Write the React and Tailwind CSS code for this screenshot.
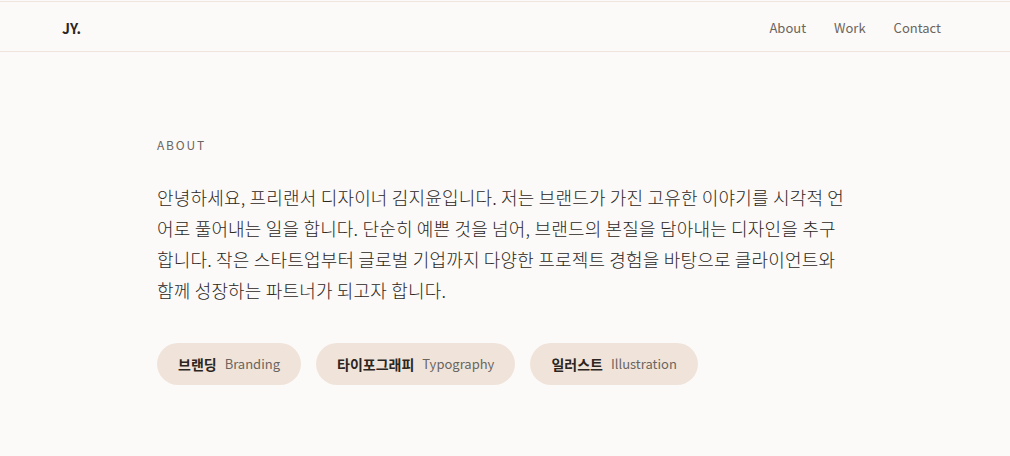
export default function App() {
  const skills = [
    { ko: "브랜딩", en: "Branding" },
    { ko: "타이포그래피", en: "Typography" },
    { ko: "일러스트", en: "Illustration" },
  ];

  return (
    <div
      className="min-h-screen bg-[#fcfaf8] pt-px text-[#2b2622]"
      style={{ fontFamily: '"Noto Sans CJK KR", "Noto Sans", sans-serif' }}
    >
      <header className="flex h-[51px] items-center justify-between border-y border-[#efe5de] pl-[62px] pr-[69px] pt-[3px]">
        <div className="text-[14px] font-bold">JY.</div>
        <nav className="flex gap-[28px] text-[13px] text-[#6b6560]">
          <a href="#about">About</a>
          <a href="#work">Work</a>
          <a href="#contact">Contact</a>
        </nav>
      </header>

      <main className="mx-auto w-[696px] pt-[84px]">
        <p className="text-[12px] tracking-[0.15em] text-[#6b6560]">ABOUT</p>
        <p className="mt-[28px] text-[18px] font-light leading-[31px] tracking-[0.01em] text-[#2b2622]">
          안녕하세요, 프리랜서 디자이너 김지윤입니다. 저는 브랜드가 가진 고유한 이야기를 시각적 언
          <br />
          어로 풀어내는 일을 합니다. 단순히 예쁜 것을 넘어, 브랜드의 본질을 담아내는 디자인을 추구
          <br />
          합니다. 작은 스타트업부터 글로벌 기업까지 다양한 프로젝트 경험을 바탕으로 클라이언트와
          <br />
          함께 성장하는 파트너가 되고자 합니다.
        </p>
        <div className="mt-[37px] flex gap-[15px]">
          {skills.map((s) => (
            <div
              key={s.en}
              className="flex h-[42px] items-center gap-[8px] rounded-full bg-[#f0e4da] px-[21px]"
            >
              <span className="text-[14px] font-bold text-[#2b2622]">{s.ko}</span>
              <span className="text-[13px] text-[#6b6560]">{s.en}</span>
            </div>
          ))}
        </div>
      </main>
    </div>
  );
}
